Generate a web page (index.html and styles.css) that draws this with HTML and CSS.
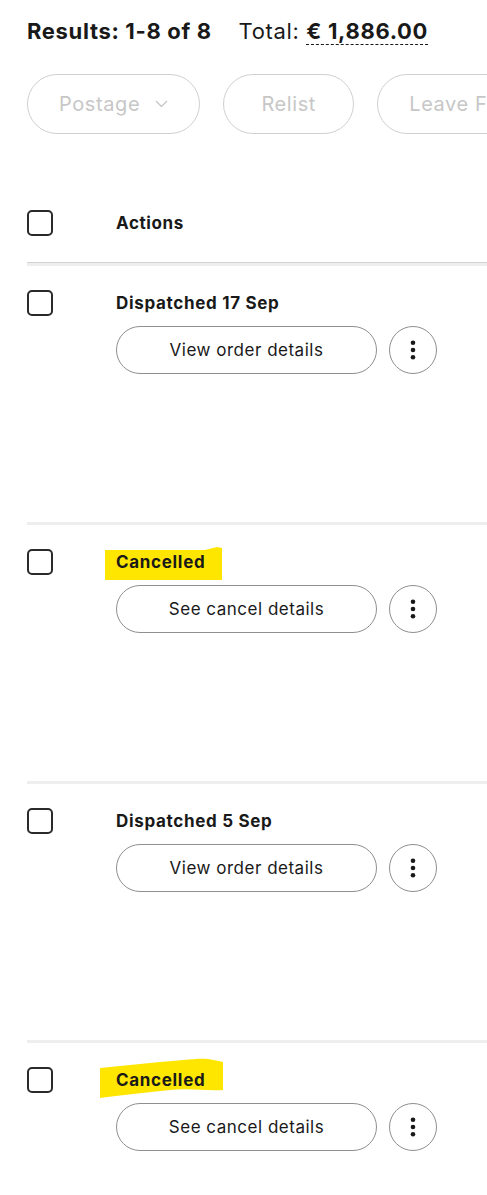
FILE: index.html
```html
<!DOCTYPE html>
<html>
<head>
    <title>Orders</title>
    <link rel="stylesheet" href="styles.css">
</head>
<body>
    <div class="page">
        <div class="summary">
            <span class="results">Results: 1-8 of 8</span>
            <span class="total">Total: <b class="amount">€ 1,886.00</b></span>
        </div>

        <div class="filters">
            <button class="filter">Postage
                <svg class="chevron" width="13" height="8" viewBox="0 0 13 8"><path d="M1 1l5.5 5.5L12 1" fill="none" stroke="#c7c7c7" stroke-width="1.4"/></svg>
            </button>
            <button class="filter">Relist</button>
            <button class="filter">Leave Feedback</button>
        </div>

        <div class="table">
            <div class="head-row">
                <span class="checkbox"></span>
                <span class="head-title">Actions</span>
            </div>

            <div class="row">
                <span class="checkbox"></span>
                <div class="cell">
                    <span class="status">Dispatched 17 Sep</span>
                    <div class="buttons">
                        <button class="action">View order details</button>
                        <button class="more"><svg width="6" height="20" viewBox="0 0 6 20"><circle cx="3" cy="2.7" r="2.3"/><circle cx="3" cy="10" r="2.3"/><circle cx="3" cy="17.3" r="2.3"/></svg></button>
                    </div>
                </div>
            </div>

            <div class="row">
                <span class="checkbox"></span>
                <div class="cell">
                    <span class="status marked">
                        <svg class="marker marker-a" width="118" height="33" viewBox="0 0 118 33"><path d="M0 3L100 3L112 0L117 1L117 33L0 33Z" fill="#ffe600"/></svg>
                        <span class="label">Cancelled</span>
                    </span>
                    <div class="buttons">
                        <button class="action">See cancel details</button>
                        <button class="more"><svg width="6" height="20" viewBox="0 0 6 20"><circle cx="3" cy="2.7" r="2.3"/><circle cx="3" cy="10" r="2.3"/><circle cx="3" cy="17.3" r="2.3"/></svg></button>
                    </div>
                </div>
            </div>

            <div class="row">
                <span class="checkbox"></span>
                <div class="cell">
                    <span class="status">Dispatched 5 Sep</span>
                    <div class="buttons">
                        <button class="action">View order details</button>
                        <button class="more"><svg width="6" height="20" viewBox="0 0 6 20"><circle cx="3" cy="2.7" r="2.3"/><circle cx="3" cy="10" r="2.3"/><circle cx="3" cy="17.3" r="2.3"/></svg></button>
                    </div>
                </div>
            </div>

            <div class="row">
                <span class="checkbox"></span>
                <div class="cell">
                    <span class="status marked">
                        <svg class="marker marker-b" width="124" height="41" viewBox="0 0 124 41"><path d="M0 10C20 8 40 6 60 4C80 3 95 0 108 1C114 2 119 3 123 4L123 32C105 33 90 30 70 32C45 35 20 37 0 40Z" fill="#ffe600"/></svg>
                        <span class="label">Cancelled</span>
                    </span>
                    <div class="buttons">
                        <button class="action">See cancel details</button>
                        <button class="more"><svg width="6" height="20" viewBox="0 0 6 20"><circle cx="3" cy="2.7" r="2.3"/><circle cx="3" cy="10" r="2.3"/><circle cx="3" cy="17.3" r="2.3"/></svg></button>
                    </div>
                </div>
            </div>
        </div>
    </div>
</body>
</html>
```

FILE: styles.css
```css
body {
    margin: 0;
    font-family: Inter, "Noto Sans", sans-serif;
    color: #191919;
    background-color: white;
}
.page {
    padding-left: 27px;
    overflow: hidden;
    height: 1195px;
}
.summary {
    padding-top: 17px;
    font-size: 22px;
    line-height: 28px;
    letter-spacing: 0.03em;
    white-space: nowrap;
}
.results {
    font-weight: bold;
    margin-right: 20px;
}
.amount {
    border-bottom: 1px dashed #191919;
}
.filters {
    display: flex;
    gap: 23px;
    margin-top: 29px;
    white-space: nowrap;
}
.filter {
    flex-shrink: 0;
    display: flex;
    align-items: center;
    justify-content: center;
    gap: 15px;
    height: 60px;
    min-width: 131px;
    padding: 0 31px;
    border: 1px solid #d0d0d0;
    border-radius: 30px;
    background: white;
    color: #c7c7c7;
    font-family: inherit;
    font-size: 20px;
    letter-spacing: 0.03em;
}
.table {
    margin-top: 76px;
}
.head-row {
    display: flex;
    align-items: center;
    padding-bottom: 26px;
    border-bottom: 1px solid #d3d3d3;
}
.checkbox {
    flex-shrink: 0;
    width: 22px;
    height: 22px;
    border: 2px solid #2a2a2a;
    border-radius: 5px;
    margin-right: 63px;
}
.head-title {
    font-size: 17px;
    font-weight: bold;
    letter-spacing: 0.035em;
}
.row {
    display: flex;
    align-items: flex-start;
    height: 259px;
    box-sizing: border-box;
    padding-top: 24px;
    border-top: 3px solid #eeeeee;
}
.status {
    display: inline-block;
    font-size: 17px;
    font-weight: bold;
    line-height: 26px;
    letter-spacing: 0.04em;
}
.marked {
    position: relative;
}
.label {
    position: relative;
}
.marker {
    position: absolute;
}
.marker-a {
    left: -11px;
    top: -2px;
}
.marker-b {
    left: -16px;
    top: -9px;
}
.buttons {
    display: flex;
    gap: 12px;
    margin-top: 10px;
}
.action {
    width: 261px;
    height: 48px;
    border: 1px solid #8f8f8f;
    border-radius: 24px;
    background: white;
    color: #191919;
    font-family: inherit;
    font-size: 17px;
    letter-spacing: 0.03em;
}
.more {
    display: flex;
    align-items: center;
    justify-content: center;
    width: 48px;
    height: 48px;
    padding: 0;
    border: 1px solid #8f8f8f;
    border-radius: 50%;
    background: white;
    fill: #191919;
}
```
